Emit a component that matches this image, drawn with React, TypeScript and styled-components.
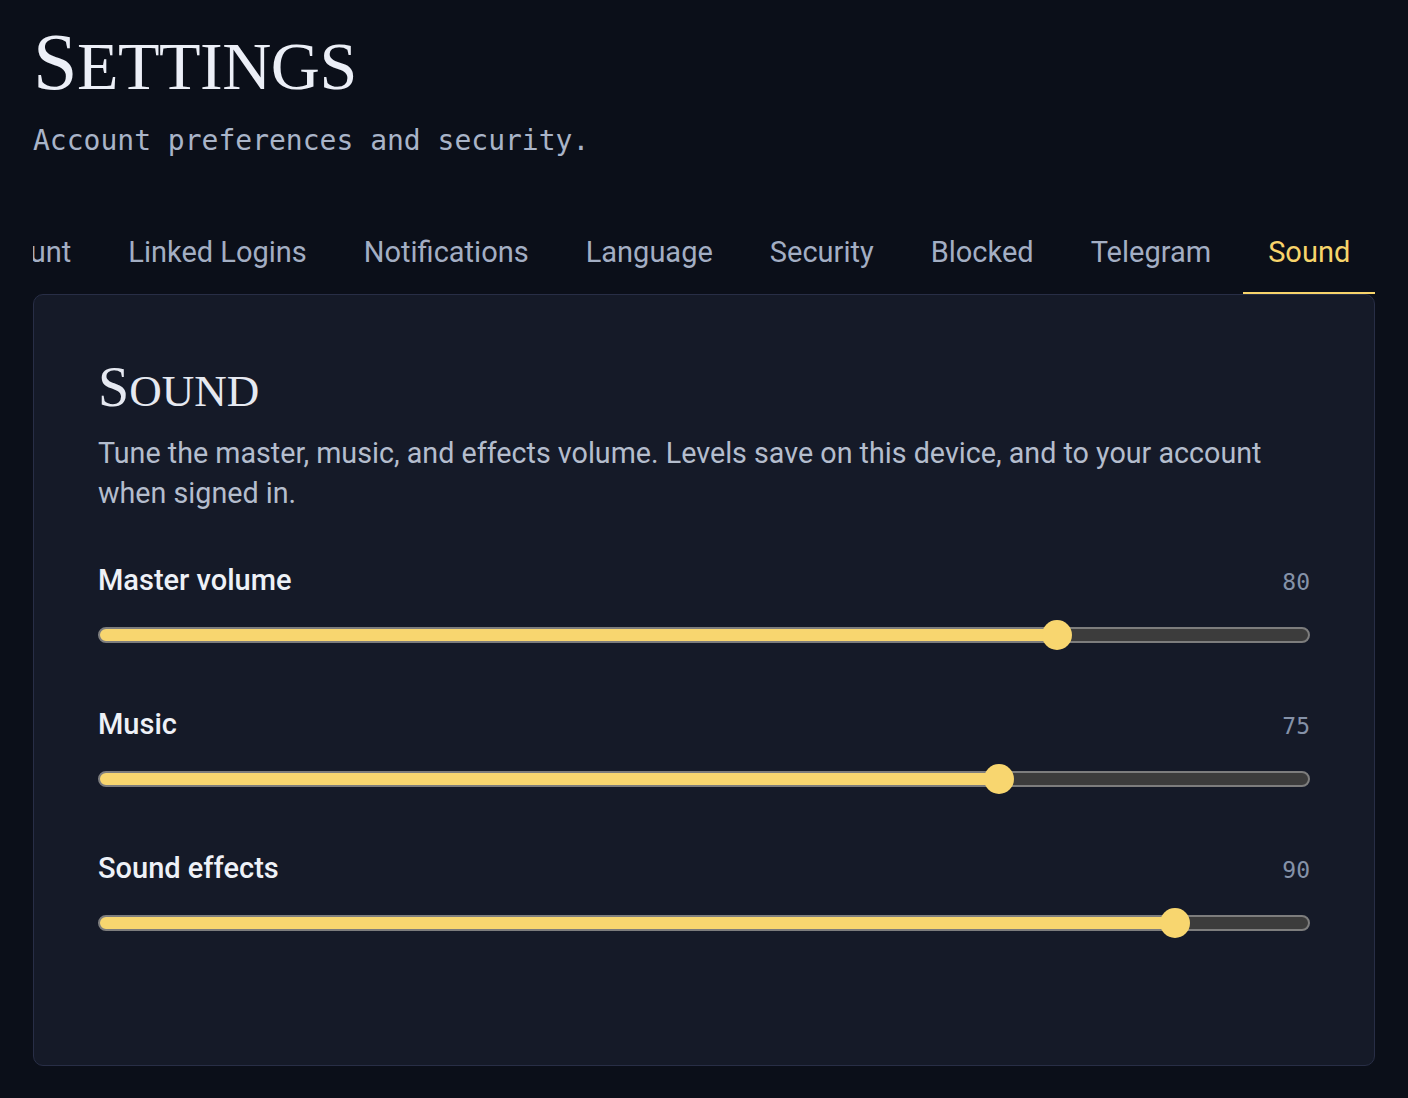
import { useLayoutEffect, useRef, useState } from 'react';
import styled, { createGlobalStyle } from 'styled-components';

const GlobalStyle = createGlobalStyle`
  *, *::before, *::after {
    box-sizing: border-box;
  }

  html,
  body {
    margin: 0;
    background: #0b0f19;
  }

  body {
    font-family: Roboto, "Noto Sans", sans-serif;
    color: #e8ecf4;
  }
`;

const Page = styled.main`
  min-height: 1098px;
  padding: 22px 33px 33px;
  display: flex;
  flex-direction: column;
`;

const Title = styled.h1`
  margin: 0;
  font-family: "Liberation Serif", "DejaVu Serif", serif;
  font-weight: 400;
  font-size: 68px;
  line-height: 1;
  letter-spacing: -0.5px;
  text-transform: uppercase;
  color: #eceff7;

  &::first-letter {
    font-size: 80px;
  }
`;

const Subtitle = styled.p`
  margin: 22px 0 0;
  font-family: "DejaVu Sans Mono", "Liberation Mono", monospace;
  font-size: 28px;
  line-height: 1.2;
  color: #a9b4c8;
`;

const TabStrip = styled.nav`
  margin-top: 62px;
  overflow: hidden;
`;

const TabList = styled.div`
  display: flex;
  gap: 7px;
  white-space: nowrap;
  width: max-content;
`;

const Tab = styled.button<{ $active?: boolean }>`
  flex: none;
  padding: 14px 25px 22px;
  border: none;
  border-bottom: 2px solid ${(p) => (p.$active ? '#f7d46b' : 'transparent')};
  background: none;
  font-family: Roboto, "Noto Sans", sans-serif;
  font-size: 29px;
  line-height: 36px;
  color: ${(p) => (p.$active ? '#f7d46b' : '#a3aec3')};
  cursor: pointer;
`;

const Panel = styled.section`
  border: 1px solid #282e46;
  border-radius: 10px;
  background: #151a28;
  padding: 62px 64px 127px;
`;

const PanelTitle = styled.h2`
  margin: 0;
  font-family: "Liberation Serif", "DejaVu Serif", serif;
  font-weight: 400;
  font-size: 45px;
  line-height: 1.1;
  text-transform: uppercase;
  color: #e6e9f1;

  &::first-letter {
    font-size: 56px;
  }
`;

const Description = styled.p`
  margin: 15px 0 0;
  font-size: 28.7px;
  line-height: 40px;
  color: #b4bdcd;
`;

const Controls = styled.div`
  margin-top: 49px;
  display: flex;
  flex-direction: column;
  gap: 56px;
`;

const Control = styled.div`
  display: flex;
  flex-direction: column;
  gap: 22px;
`;

const ControlHead = styled.div`
  display: flex;
  justify-content: space-between;
  align-items: baseline;
`;

const Label = styled.label`
  font-size: 29px;
  font-weight: 500;
  line-height: 36px;
  color: #eef1f7;
`;

const Value = styled.span`
  font-family: "DejaVu Sans Mono", "Liberation Mono", monospace;
  font-size: 23px;
  color: #8592a8;
`;

const Range = styled.input.attrs({ type: 'range', min: 0, max: 100 })`
  -webkit-appearance: none;
  appearance: none;
  width: 100%;
  height: 30px;
  margin: 0;
  background: transparent;

  &::-webkit-slider-runnable-track {
    box-sizing: border-box;
    height: 16px;
    border: 2px solid #7d7d7d;
    border-radius: 8px;
    background: linear-gradient(
      to right,
      #f8d66f calc(15px + (100% - 30px) * var(--fill)),
      #3c3c3c 0
    );
  }

  &::-webkit-slider-thumb {
    -webkit-appearance: none;
    width: 30px;
    height: 30px;
    margin-top: -9px;
    border: none;
    border-radius: 50%;
    background: #f8d66f;
  }
`;

const tabs = [
  'Account',
  'Linked Logins',
  'Notifications',
  'Language',
  'Security',
  'Blocked',
  'Telegram',
  'Sound',
];

const channels = [
  { id: 'master', label: 'Master volume', value: 80 },
  { id: 'music', label: 'Music', value: 75 },
  { id: 'sfx', label: 'Sound effects', value: 90 },
];

function VolumeControl({ id, label, initial }: { id: string; label: string; initial: number }) {
  const [value, setValue] = useState(initial);
  return (
    <Control>
      <ControlHead>
        <Label htmlFor={id}>{label}</Label>
        <Value>{value}</Value>
      </ControlHead>
      <Range
        id={id}
        value={value}
        onChange={(e) => setValue(Number(e.target.value))}
        style={{ '--fill': value / 100 } as React.CSSProperties}
      />
    </Control>
  );
}

export default function App() {
  const stripRef = useRef<HTMLElement>(null);
  const [active, setActive] = useState('Sound');

  // keep the active tab in view: the strip is scrolled to its end
  useLayoutEffect(() => {
    const strip = stripRef.current;
    if (strip) strip.scrollLeft = strip.scrollWidth;
  }, []);

  return (
    <>
      <GlobalStyle />
      <Page>
        <Title>Settings</Title>
        <Subtitle>Account preferences and security.</Subtitle>

        <TabStrip ref={stripRef}>
          <TabList>
            {tabs.map((t) => (
              <Tab key={t} $active={t === active} onClick={() => setActive(t)}>
                {t}
              </Tab>
            ))}
          </TabList>
        </TabStrip>

        <Panel>
          <PanelTitle>Sound</PanelTitle>
          <Description>
            Tune the master, music, and effects volume. Levels save on this device, and to your account
            when signed in.
          </Description>
          <Controls>
            {channels.map((c) => (
              <VolumeControl key={c.id} id={c.id} label={c.label} initial={c.value} />
            ))}
          </Controls>
        </Panel>
      </Page>
    </>
  );
}
